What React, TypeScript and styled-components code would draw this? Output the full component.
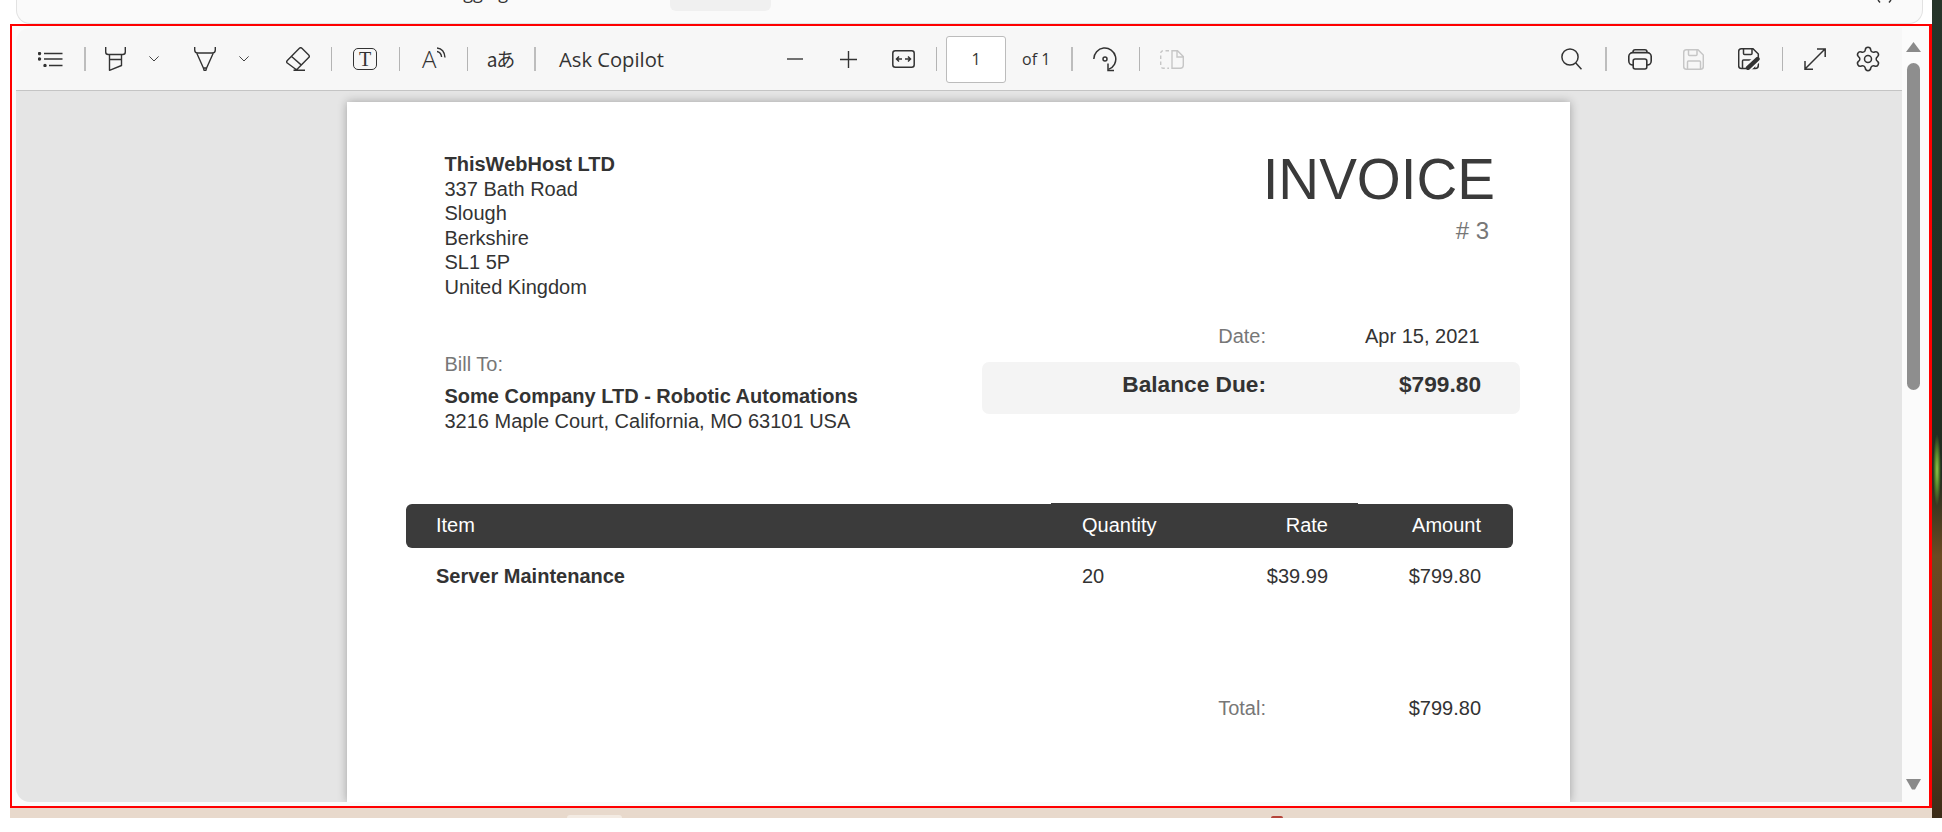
import React from 'react';
import styled, { createGlobalStyle } from 'styled-components';
import { Settings } from 'lucide-react';

const INK = '#333333';
const OFF = '#c6c6c6';

function App() {
  return (
    <>
      <GlobalStyle />
      <Screen>
        <Gutter />
        <Middle>
          <TabStrip>
            <TabLabel>Debugging</TabLabel>
            <TabPill />
            <TabClose width="17" height="3" viewBox="0 0 17 3">
              <path d="M2 0l2 2.5M15 0l-2 2.5" stroke={INK} strokeWidth="1.4" fill="none" />
            </TabClose>
          </TabStrip>

          <Frame>
            <Panel>
              <Viewer>
                <Toolbar>
                  <ToolGroup>
                    <Tool $ml={0}>
                      <svg width="25" height="15" viewBox="0 0 25 15" fill="none" stroke={INK} strokeWidth="1.4">
                        <path d="M6 1.5h18.5M6 7h18.5M11 13.5h13.5" />
                        <circle cx="1.5" cy="1.5" r="1" fill={INK} />
                        <circle cx="1.5" cy="7" r="1" fill={INK} />
                        <circle cx="7" cy="13.5" r="1" fill={INK} />
                      </svg>
                    </Tool>
                    <Sep $ml={21} $thick />
                    <Tool $ml={19}>
                      <svg width="21" height="24" viewBox="0 0 21 24" fill="none" stroke={INK} strokeWidth="1.4" strokeLinejoin="round">
                        <path d="M.7 0v5q0 2.5 2.5 2.5h14.6q2.5 0 2.5-2.5V0" />
                        <path d="M4.5 7.5V23.3L16.5 18.5V7.5M4.5 12.5h12" />
                      </svg>
                    </Tool>
                    <Tool $ml={23}><Chevron /></Tool>
                    <Tool $ml={35}>
                      <svg width="22" height="24" viewBox="0 0 22 24" fill="none" stroke={INK} strokeWidth="1.4" strokeLinejoin="round">
                        <path d="M.7 0v3q0 3 3 3h14.6q3 0 3-3V0" />
                        <path d="M2.8 6.2 9.4 21h3.2l6.6-14.8M9.4 21l.8 2.5h1.6l.8-2.5" />
                      </svg>
                    </Tool>
                    <Tool $ml={23}><Chevron /></Tool>
                    <Tool $ml={37}>
                      <svg width="24" height="24" viewBox="0 0 24 24" fill="none" stroke={INK} strokeWidth="1.4" strokeLinejoin="round">
                        <path d="M13.4 1.3a1.8 1.8 0 0 1 2.5 0l6.8 6.8a1.8 1.8 0 0 1 0 2.5L11.6 21.8a1.8 1.8 0 0 1-2.5 0L1.3 16a1.8 1.8 0 0 1 0-2.5zM5.6 9.5l9.8 8.6M7.5 23.3H19" />
                      </svg>
                    </Tool>
                    <Sep $ml={21} />
                    <TextBox $ml={21}>T</TextBox>
                    <Sep $ml={22} />
                    <ReadAloud $ml={22}>
                      <span>A</span>
                      <svg width="10" height="11" viewBox="0 0 10 11" fill="none" stroke={INK} strokeWidth="1.4">
                        <path d="M1 1c4.5.4 7.6 4 8 9.5M1 4.5c2.5.4 4.3 2.6 4.6 5.5" />
                      </svg>
                    </ReadAloud>
                    <Sep $ml={21} />
                    <Translate $ml={19}>aあ</Translate>
                    <Sep $ml={20} $thick />
                    <Copilot $ml={23}>Ask Copilot</Copilot>
                  </ToolGroup>

                  <ZoomGroup>
                    <Tool $ml={0}>
                      <svg width="16" height="2" viewBox="0 0 16 2"><path d="M0 1h16" stroke="#444" strokeWidth="1.5" /></svg>
                    </Tool>
                    <Tool $ml={37}>
                      <svg width="17" height="17" viewBox="0 0 17 17"><path d="M0 8.5h17M8.5 0v17" stroke={INK} strokeWidth="1.4" /></svg>
                    </Tool>
                    <Tool $ml={35}>
                      <svg width="23" height="18" viewBox="0 0 23 18" fill="none" stroke={INK} strokeWidth="1.5">
                        <rect x=".8" y=".8" width="21.4" height="16.4" rx="2.5" />
                        <path d="M10 9H4.5M7 6.5 4.5 9 7 11.5M13 9h5.5M16 6.5 18.5 9 16 11.5" />
                      </svg>
                    </Tool>
                    <Sep $ml={21} />
                    <PageInput $ml={9}>1</PageInput>
                    <PageCount $ml={16}>of 1</PageCount>
                    <Sep $ml={21} $thick />
                    <Tool $ml={20}>
                      <svg width="24" height="25" viewBox="0 0 24 25" fill="none" stroke={INK} strokeWidth="1.5">
                        <path d="M.8 12A11 11 0 1 1 15.5 22.4" />
                        <circle cx="12" cy="12" r="2" />
                        <path d="M15 16.5V23.5H21" />
                      </svg>
                    </Tool>
                    <Sep $ml={22} />
                    <Tool $ml={20}>
                      <svg width="24" height="19" viewBox="0 0 24 19" fill="none" stroke={OFF} strokeWidth="1.4">
                        <path d="M12 .7h5.5l5.8 5.8v8.8q0 3-3 3H12zM17 1v6h6" />
                        <path d="M9 .7H3.5q-2.8 0-2.8 2.8V15q0 3.3 3 3.3H9" strokeDasharray="3.5 2.5" />
                      </svg>
                    </Tool>
                  </ZoomGroup>

                  <RightGroup>
                    <Tool $ml={0}>
                      <svg width="21" height="22" viewBox="0 0 21 22" fill="none" stroke={INK} strokeWidth="1.5">
                        <circle cx="9" cy="9" r="8.1" />
                        <path d="M14.8 15 20.5 21.3" />
                      </svg>
                    </Tool>
                    <Sep $ml={23} $thick />
                    <Tool $ml={21}>
                      <svg width="24" height="21" viewBox="0 0 24 21" fill="none" stroke={INK} strokeWidth="1.6">
                        <path d="M5 4V3q0-2.2 2.2-2.2h9.6Q19 .8 19 3v1" />
                        <rect x=".8" y="3.6" width="22.4" height="12.4" rx="4" />
                        <rect x="5.2" y="10" width="13.6" height="10" rx="2" fill="#f7f7f7" />
                      </svg>
                    </Tool>
                    <Tool $ml={31}><SaveGlyph color={OFF} /></Tool>
                    <Tool $ml={34}>
                      <svg width="22" height="22" viewBox="0 0 22 22" fill="none">
                        <g stroke={INK} strokeWidth="1.5">
                          <path d="M3.3.8H15L20.3 6v11.4q0 3-3 3H3.3q-2.6 0-2.6-2.6V3.4Q.7.8 3.3.8z" />
                          <path d="M5.5 1v4.5q0 1 1 1H13q1 0 1-1V1M4.5 20v-7q0-1 1-1h10q1 0 1 1v7" />
                        </g>
                        <path d="M9 20.5 20.5 10" stroke="#f7f7f7" strokeWidth="8" />
                        <path d="M10 19.8 19.5 11" stroke={INK} strokeWidth="4.4" strokeLinecap="round" />
                      </svg>
                    </Tool>
                    <Sep $ml={22} />
                    <Tool $ml={21}>
                      <svg width="22" height="22" viewBox="0 0 22 22" fill="none" stroke={INK} strokeWidth="1.5">
                        <path d="M1 21 21 1M13 1h8.2v8M1 13v8.2h8" />
                      </svg>
                    </Tool>
                    <Tool $ml={28}><Settings size={28} color={INK} strokeWidth={1.3} /></Tool>
                  </RightGroup>
                </Toolbar>

                <Canvas>
                  <Page>
                    <Heading>
                      <Sender>
                        <Strong>ThisWebHost LTD</Strong>
                        <Line>337 Bath Road</Line>
                        <Line>Slough</Line>
                        <Line>Berkshire</Line>
                        <Line>SL1 5P</Line>
                        <Line>United Kingdom</Line>
                        <BillLabel>Bill To:</BillLabel>
                        <BillName>Some Company LTD - Robotic Automations</BillName>
                        <Line>3216 Maple Court, California, MO 63101 USA</Line>
                      </Sender>
                      <Summary>
                        <InvoiceTitle>INVOICE</InvoiceTitle>
                        <InvoiceNumber># 3</InvoiceNumber>
                        <DateRow>
                          <MutedLabel>Date:</MutedLabel>
                          <DateValue>Apr 15, 2021</DateValue>
                        </DateRow>
                        <BalanceBox>
                          <span>Balance Due:</span>
                          <span>$799.80</span>
                        </BalanceBox>
                      </Summary>
                    </Heading>

                    <TableHead>
                      <span>Item</span>
                      <span>Quantity</span>
                      <RightCell>Rate</RightCell>
                      <RightCell>Amount</RightCell>
                    </TableHead>
                    <TableRow>
                      <Strong>Server Maintenance</Strong>
                      <span>20</span>
                      <RightCell>$39.99</RightCell>
                      <RightCell>$799.80</RightCell>
                    </TableRow>
                    <TotalRow>
                      <MutedLabel>Total:</MutedLabel>
                      <RightCell>$799.80</RightCell>
                    </TotalRow>
                  </Page>
                </Canvas>
              </Viewer>

              <Scrollbar>
                <Arrow viewBox="0 0 15 10"><path d="M7.5 0 15 10H0z" /></Arrow>
                <Thumb />
                <Arrow $down viewBox="0 0 15 11"><path d="M0 0h15L9 10.5H6z" /></Arrow>
              </Scrollbar>
            </Panel>
          </Frame>

          <TaskStrip>
            <TaskTab />
            <TaskMark />
          </TaskStrip>
        </Middle>
        <Wallpaper />
      </Screen>
    </>
  );
}

function Chevron() {
  return (
    <svg width="10" height="6" viewBox="0 0 10 6" fill="none" stroke="#444" strokeWidth="1">
      <path d="M.4.4 5 5 9.6.4" />
    </svg>
  );
}

function SaveGlyph({ color }: { color: string }) {
  return (
    <svg width="21" height="21" viewBox="0 0 21 21" fill="none" stroke={color} strokeWidth="1.5">
      <path d="M3.3.8H15L20.3 6v11.6q0 2.6-2.6 2.6H3.3q-2.6 0-2.6-2.6V3.4Q.7.8 3.3.8z" />
      <path d="M5.5 1v4.5q0 1 1 1H13q1 0 1-1V1M4.5 20v-7q0-1 1-1h11q1 0 1 1v7" />
    </svg>
  );
}

export default App;

const GlobalStyle = createGlobalStyle`
  html, body {
    margin: 0;
    padding: 0;
    background: #fff;
    overflow: hidden;
  }
`;

const Screen = styled.div`
  width: 1942px;
  height: 818px;
  display: flex;
  background: #fff;
`;

const Gutter = styled.div`
  width: 10px;
  flex: none;
`;

const Middle = styled.div`
  width: 1922px;
  flex: none;
  display: flex;
  flex-direction: column;
`;

const Wallpaper = styled.div`
  width: 10px;
  flex: none;
  background:
    radial-gradient(ellipse 4px 36px at 5px 470px, #8fc24a 0%, #5a8a2c 45%, transparent 100%),
    linear-gradient(180deg, #26352a 0%, #1f2c1f 58%, #6b4a22 68%, #5c4120 85%, #3c2c18 100%);
`;

const TabStrip = styled.div`
  height: 24px;
  margin: 0 9px 0 6px;
  flex: none;
  display: flex;
  align-items: flex-start;
  overflow: hidden;
  background: #fafafa;
  border: 1px solid #e2e2e2;
  border-top: 0;
  border-radius: 0 0 14px 14px;
  box-sizing: border-box;
`;

const TabLabel = styled.div`
  width: 252px;
  margin: -19px 0 0 401px;
  flex: none;
  font: 18px/22px 'Open Sans', sans-serif;
  color: ${INK};
`;

const TabPill = styled.div`
  width: 101px;
  height: 11px;
  flex: none;
  background: #f0f0f0;
  border-radius: 0 0 6px 6px;
`;

const TabClose = styled.svg`
  margin-left: auto;
  margin-right: 29px;
  display: block;
`;

const Frame = styled.div`
  height: 784px;
  flex: none;
  display: flex;
  box-sizing: border-box;
  padding: 2px 4px 4px 4px;
  border: 2px solid #ff0000;
  border-right-width: 3px;
  background: #fbfbfb;
`;

const Panel = styled.div`
  flex: 1;
  min-width: 0;
  display: flex;
  overflow: hidden;
  border-radius: 14px;
`;

const Viewer = styled.div`
  flex: 1;
  min-width: 0;
  display: flex;
  flex-direction: column;
`;

const Toolbar = styled.div`
  height: 63px;
  flex: none;
  display: flex;
  align-items: center;
  box-sizing: border-box;
  padding: 0 20px 0 22px;
  background: #f7f7f7;
  border-bottom: 1px solid #c4c4c4;
`;

const ToolGroup = styled.div`
  display: flex;
  align-items: center;
`;

const ZoomGroup = styled(ToolGroup)`
  margin-left: 123px;
`;

const RightGroup = styled(ToolGroup)`
  margin-left: auto;
`;

const Tool = styled.div<{ $ml: number }>`
  margin-left: ${p => p.$ml}px;
  display: flex;
  align-items: center;
  justify-content: center;
  flex: none;

  svg {
    display: block;
  }
`;

const Sep = styled.div<{ $ml: number; $thick?: boolean }>`
  width: ${p => (p.$thick ? 2 : 1)}px;
  height: 24px;
  margin-left: ${p => p.$ml}px;
  flex: none;
  background: ${p => (p.$thick ? '#bdbdbd' : '#b4b4b4')};
`;

const TextBox = styled(Tool)`
  width: 24px;
  height: 22px;
  box-sizing: border-box;
  border: 1.5px solid ${INK};
  border-radius: 5px;
  font: 20px/1 'Liberation Serif', serif;
  color: ${INK};
`;

const ReadAloud = styled(Tool)`
  width: 24px;
  height: 24px;
  align-items: flex-start;
  justify-content: flex-start;
  color: ${INK};

  span {
    margin-top: -1px;
    font: 300 24px/26px 'Open Sans', sans-serif;
    width: 14px;
  }
`;

const Translate = styled(Tool)`
  width: 27px;
  white-space: nowrap;
  font: 19px/24px 'Noto Sans CJK JP', 'Noto Sans', sans-serif;
  letter-spacing: -1px;
  color: ${INK};
`;

const Copilot = styled(Tool)`
  width: 105px;
  justify-content: flex-start;
  white-space: nowrap;
  font: 20.2px/24px 'Open Sans', sans-serif;
  color: ${INK};
`;

const PageInput = styled(Tool)`
  width: 60px;
  height: 47px;
  box-sizing: border-box;
  background: #fff;
  border: 1px solid #bcbcbc;
  border-radius: 3px;
  font: 16px/1 'Open Sans', sans-serif;
  color: ${INK};
`;

const PageCount = styled(Tool)`
  width: 28px;
  justify-content: flex-start;
  white-space: nowrap;
  font: 16px/1 'Open Sans', sans-serif;
  color: ${INK};
`;

const Canvas = styled.div`
  flex: 1;
  min-height: 0;
  display: flex;
  padding: 11px 332px 0 331px;
  background: #e5e5e5;
`;

const Page = styled.div`
  flex: 1;
  box-sizing: border-box;
  padding-top: 50px;
  background: #fff;
  box-shadow: 0 0 9px rgba(0, 0, 0, 0.3);
  font: 20px/24.6px 'Liberation Sans', Arial, sans-serif;
  color: ${INK};
`;

const Heading = styled.div`
  display: flex;
  justify-content: space-between;
  padding: 0 50px 0 97.5px;
`;

const Sender = styled.div`
  display: flex;
  flex-direction: column;
`;

const Strong = styled.div`
  font-weight: 700;
`;

const Line = styled.div``;

const BillLabel = styled.div`
  margin-top: 52px;
  color: #777;
`;

const BillName = styled(Strong)`
  margin-top: 8px;
`;

const Summary = styled.div`
  width: 538px;
  display: flex;
  flex-direction: column;
`;

const InvoiceTitle = styled.div`
  padding-right: 25px;
  text-align: right;
  font-size: 56.5px;
  line-height: 56px;
  color: #3a3a3a;
`;

const InvoiceNumber = styled.div`
  margin-top: 11px;
  padding-right: 31px;
  text-align: right;
  font-size: 24px;
  line-height: 24px;
  color: #777;
`;

const DateRow = styled.div`
  margin-top: 81px;
  display: grid;
  grid-template-columns: 284px 213.5px;
`;

const MutedLabel = styled.div`
  text-align: right;
  color: #777;
`;

const DateValue = styled.div`
  text-align: right;
`;

const BalanceBox = styled.div`
  height: 52px;
  margin-top: 13px;
  box-sizing: border-box;
  padding-top: 9px;
  display: grid;
  grid-template-columns: 284px 215px;
  background: #f4f4f4;
  border-radius: 7px;
  text-align: right;
  font-size: 22.7px;
  line-height: 26px;
  font-weight: 700;
`;

const RightCell = styled.div`
  text-align: right;
`;

const TableHead = styled.div`
  position: relative;
  z-index: 0;
  width: 1107px;
  height: 44px;
  margin: 71px 0 0 59px;
  padding: 0 0 3px 30px;
  display: grid;
  grid-template-columns: 646px 144px 102px 153px;
  align-items: center;
  box-sizing: border-box;
  background: #3b3b3b;
  border-radius: 6px;
  color: #fff;

  &::before {
    content: '';
    position: absolute;
    left: 645px;
    width: 307px;
    top: -1px;
    bottom: 0;
    background: #3b3b3b;
    z-index: -1;
  }
`;

const TableRow = styled.div`
  width: 1107px;
  margin: 16px 0 0 59px;
  display: grid;
  grid-template-columns: 646px 144px 102px 153px;
  box-sizing: border-box;
  padding-left: 30px;
`;

const TotalRow = styled.div`
  width: 1107px;
  margin: 107px 0 0 59px;
  display: grid;
  grid-template-columns: 860px 215px;
`;

const Scrollbar = styled.div`
  width: 23px;
  flex: none;
  display: flex;
  flex-direction: column;
  align-items: center;
  box-sizing: border-box;
  padding-top: 14px;
  background: #fbfbfb;
`;

const Arrow = styled.svg<{ $down?: boolean }>`
  width: 15px;
  height: ${p => (p.$down ? 11 : 10)}px;
  flex: none;
  margin-top: ${p => (p.$down ? 389 : 0)}px;
  fill: #8a8a8a;
`;

const Thumb = styled.div`
  width: 13px;
  height: 327px;
  margin-top: 11px;
  flex: none;
  border-radius: 7px;
  background: #8e8e8e;
`;

const TaskStrip = styled.div`
  flex: 1;
  display: flex;
  align-items: flex-end;
  padding-left: 557px;
  background: #e8d9cc;
`;

const TaskTab = styled.div`
  width: 55px;
  height: 3px;
  background: #f3ebe3;
  border-radius: 3px 3px 0 0;
`;

const TaskMark = styled.div`
  width: 12px;
  height: 2px;
  margin-left: 649px;
  background: #b5443a;
  border-radius: 2px 2px 0 0;
`;
